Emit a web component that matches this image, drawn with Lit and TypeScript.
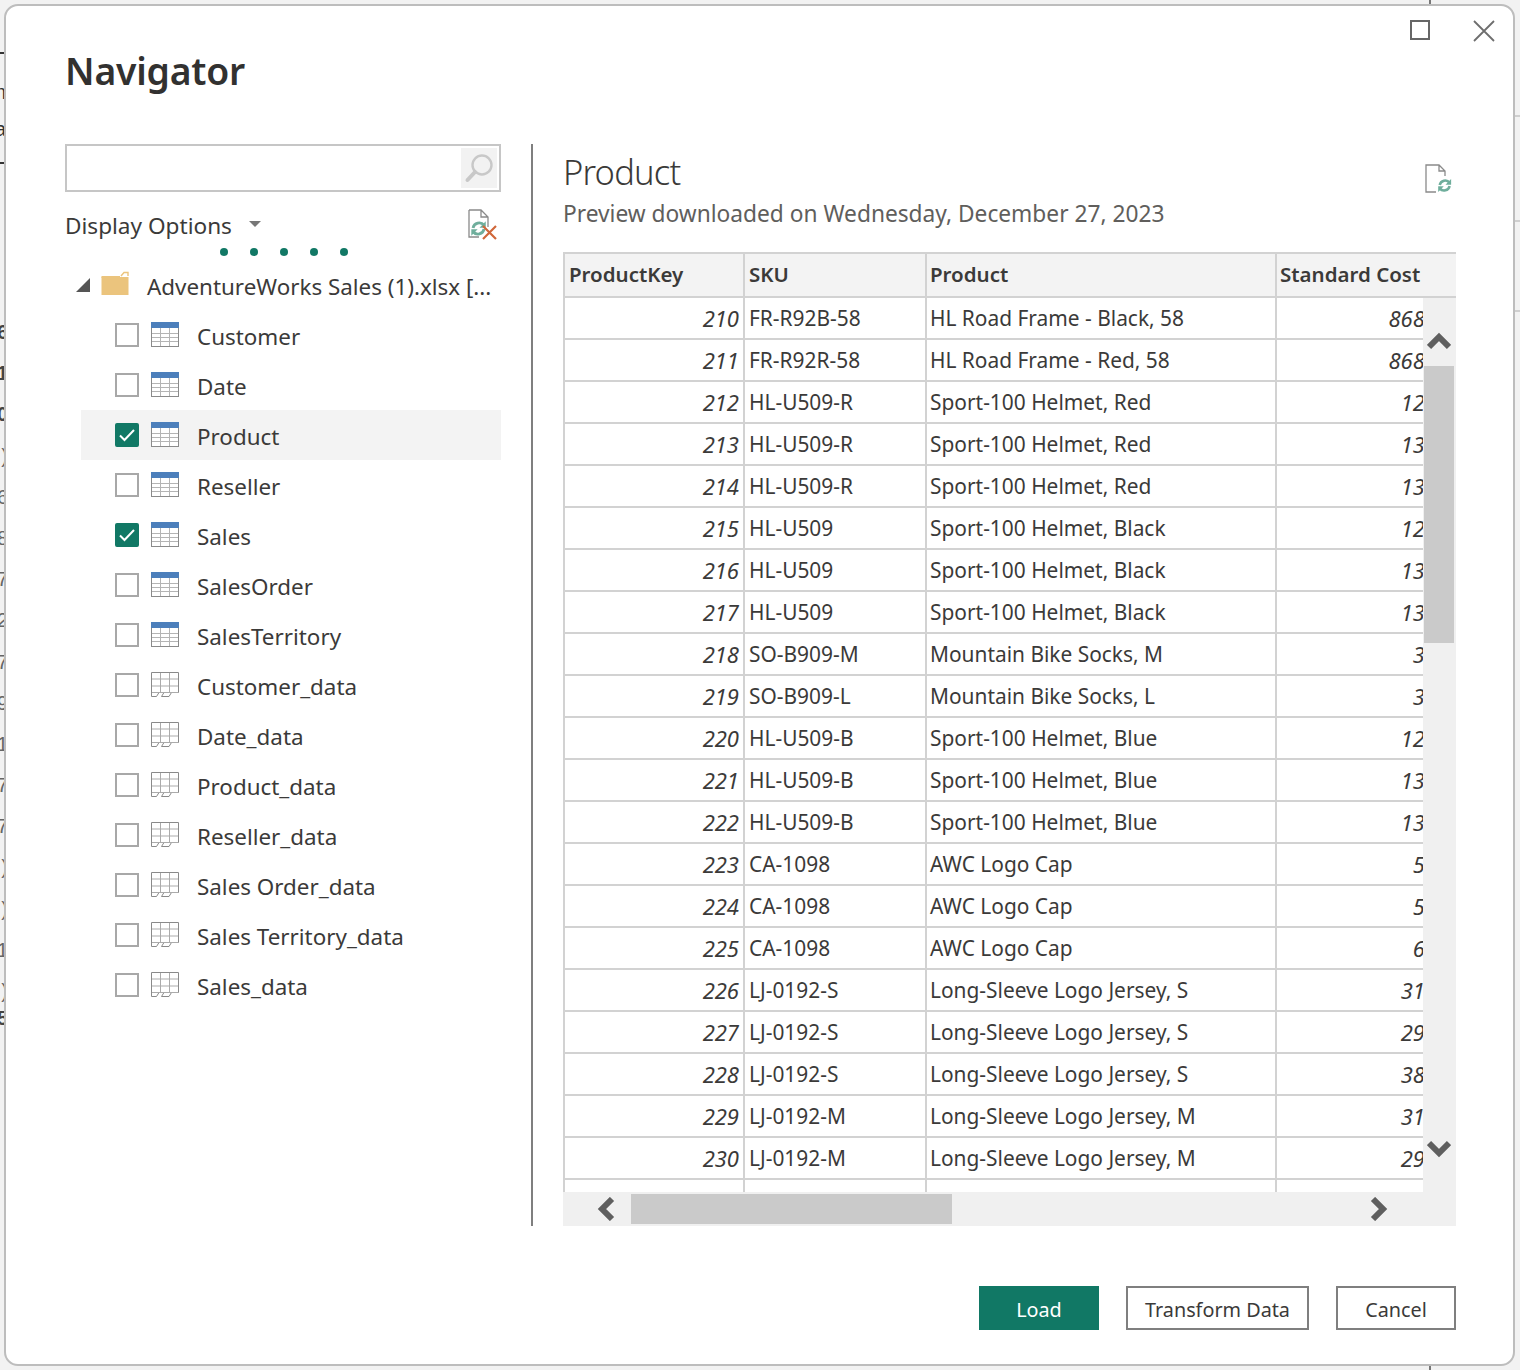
import { LitElement, html, css, svg } from "lit";
import { customElement } from "lit/decorators.js";

const ROWS: [string, string, string, string][] = [
  ["210", "FR-R92B-58", "HL Road Frame - Black, 58", "868.6342"],
  ["211", "FR-R92R-58", "HL Road Frame - Red, 58", "868.6342"],
  ["212", "HL-U509-R", "Sport-100 Helmet, Red", "12.0278"],
  ["213", "HL-U509-R", "Sport-100 Helmet, Red", "13.8782"],
  ["214", "HL-U509-R", "Sport-100 Helmet, Red", "13.0863"],
  ["215", "HL-U509", "Sport-100 Helmet, Black", "12.0278"],
  ["216", "HL-U509", "Sport-100 Helmet, Black", "13.8782"],
  ["217", "HL-U509", "Sport-100 Helmet, Black", "13.0863"],
  ["218", "SO-B909-M", "Mountain Bike Socks, M", "3.3963"],
  ["219", "SO-B909-L", "Mountain Bike Socks, L", "3.3963"],
  ["220", "HL-U509-B", "Sport-100 Helmet, Blue", "12.0278"],
  ["221", "HL-U509-B", "Sport-100 Helmet, Blue", "13.8782"],
  ["222", "HL-U509-B", "Sport-100 Helmet, Blue", "13.0863"],
  ["223", "CA-1098", "AWC Logo Cap", "5.7052"],
  ["224", "CA-1098", "AWC Logo Cap", "5.2297"],
  ["225", "CA-1098", "AWC Logo Cap", "6.9223"],
  ["226", "LJ-0192-S", "Long-Sleeve Logo Jersey, S", "31.7244"],
  ["227", "LJ-0192-S", "Long-Sleeve Logo Jersey, S", "29.0807"],
  ["228", "LJ-0192-S", "Long-Sleeve Logo Jersey, S", "38.4923"],
  ["229", "LJ-0192-M", "Long-Sleeve Logo Jersey, M", "31.7244"],
  ["230", "LJ-0192-M", "Long-Sleeve Logo Jersey, M", "29.0807"],
  ["", "", "", ""],
];

const ITEMS: [string, boolean, "table" | "sheet"][] = [
  ["Customer", false, "table"],
  ["Date", false, "table"],
  ["Product", true, "table"],
  ["Reseller", false, "table"],
  ["Sales", true, "table"],
  ["SalesOrder", false, "table"],
  ["SalesTerritory", false, "table"],
  ["Customer_data", false, "sheet"],
  ["Date_data", false, "sheet"],
  ["Product_data", false, "sheet"],
  ["Reseller_data", false, "sheet"],
  ["Sales Order_data", false, "sheet"],
  ["Sales Territory_data", false, "sheet"],
  ["Sales_data", false, "sheet"],
];

const tableIcon = html`<svg class="ticon" width="28" height="26" viewBox="0 0 28 26">
  <rect x="0.5" y="1" width="27" height="23.5" fill="#fff" stroke="#8a8a8a"/>
  <path d="M1 11.5H27M1 15.5H27M1 19.5H27M9.5 6V24M18.5 6V24" stroke="#b4b4b4" fill="none"/>
  <rect x="0" y="0" width="28" height="6" fill="#4c7fbb"/>
</svg>`;

const sheetIcon = html`<svg class="ticon" width="28" height="26" viewBox="0 0 28 26">
  <path d="M0.5 0.5H27.5V20.5H20.5L18 24.5H10.5L13 20.5H8L5.5 24.5H0.5Z" fill="#fff" stroke="#8a8a8a"/>
  <path d="M1 7H27M1 14H27M1 20.5H27M9.5 1V20M18.5 1V20" stroke="#ababab" fill="none"/>
</svg>`;

const arrows = svg`
  <path d="M3.2 9.5A6.6 6.6 0 0 1 14.8 6.6" fill="none" stroke="#6fae9c" stroke-width="3"/>
  <path d="M16.6 2.4V9.2H10Z" fill="#6fae9c"/>
  <path d="M14.8 10.5A6.6 6.6 0 0 1 3.2 13.4" fill="none" stroke="#6fae9c" stroke-width="3"/>
  <path d="M1.4 17.6V10.8H8Z" fill="#6fae9c"/>`;

const FONT = css`"Noto Sans", "Open Sans", sans-serif`;

@customElement("app-root")
export class AppRoot extends LitElement {
  static styles = css`
    :host {
      display: block;
      position: relative;
      width: 1520px;
      height: 1370px;
      box-sizing: border-box;
      padding: 4px 5px 4px 4px;
      background: #fafafa;
      font-family: ${FONT};
      color: #3b3a39;
      overflow: hidden;
    }
    .desk { position: absolute; inset: 0; overflow: hidden; background: #f2f2f2; }
    .desk .hline { position: absolute; left: 0; width: 8px; height: 2px; background: #333; }
    .desk .rline { position: absolute; left: 1512px; width: 8px; height: 2px; background: #cfcfcf; }
    .desk .vline { position: absolute; left: 1429px; width: 2px; height: 6px; background: #777; }
    .desk .glyphs {
      position: absolute; left: 0; top: 312px; width: 8px;
      display: flex; flex-direction: column; align-items: flex-end;
      font: 700 20px/41.2px "Liberation Sans", sans-serif; color: #444;
    }
    .desk .glyphs span { height: 41.2px; }
    .desk .glyphs .soft { font-weight: 400; color: #666; }
    .desk .glyphs .last { margin-top: -14px; }
    .desk .word {
      position: absolute; left: -10px; width: 16px; text-align: right;
      font: 400 20px/24px "Liberation Sans", sans-serif; color: #333;
    }
    .dialog {
      position: relative;
      box-sizing: border-box;
      width: 1511px;
      height: 1362px;
      border: 2px solid #bdbdbd;
      border-radius: 14px;
      background: #fff;
      display: flex;
      flex-direction: column;
    }
    .head {
      height: 138px;
      flex: none;
      display: flex;
      align-items: flex-start;
      padding: 14px 18px 0 59px;
      box-sizing: border-box;
    }
    h1 {
      margin: 26px 0 0;
      font-size: 37.3px;
      line-height: 50px;
      font-weight: 600;
      color: #323130;
      letter-spacing: -0.2px;
    }
    .winctl { margin-left: auto; display: flex; gap: 43px; }
    .winctl svg { display: block; }
    .body {
      flex: none;
      height: 1082px;
      display: grid;
      grid-template-columns: 436px 2px 893px;
      column-gap: 30px;
      padding: 0 57px 0 59px;
    }
    .divider { background: #7f7f7f; width: 2px; }
    .left { display: flex; flex-direction: column; min-width: 0; }
    .search {
      box-sizing: border-box;
      height: 48px;
      border: 2px solid #c6c6c6;
      display: flex;
      justify-content: flex-end;
      padding: 2px;
    }
    .search .btn {
      width: 36px; height: 40px; background: #f2f2f2;
      display: flex; align-items: center; justify-content: center;
    }
    .opts {
      height: 56px;
      display: flex;
      align-items: center;
      font-size: 22.6px;
      padding-top: 10px;
      box-sizing: border-box;
    }
    .opts .caret {
      width: 0; height: 0; margin: -2px 0 0 17px;
      border-left: 6px solid transparent; border-right: 6px solid transparent;
      border-top: 6px solid #777;
    }
    .opts svg { margin-left: auto; margin-right: 3px; }
    .dots { height: 8px; display: flex; gap: 22px; padding-left: 155px; }
    .dots i { width: 8px; height: 8px; border-radius: 50%; background: #117865; display: block; }
    .tree-head {
      height: 54px; display: flex; align-items: center;
      padding: 6px 0 0 11px; box-sizing: border-box;
      font-size: 22.4px;
      white-space: nowrap;
    }
    .tree-head .tri { margin-right: 11px; margin-top: -2px; }
    .tree-head .folder { margin-right: 18px; margin-top: -6px; }
    .row {
      height: 50px; display: flex; align-items: center;
      margin-left: 16px; padding-left: 34px;
      font-size: 22.4px;
    }
    .row.sel { background: #f3f3f3; }
    .name { margin-top: 2px; }
    .check {
      box-sizing: border-box; width: 24px; height: 24px;
      border: 2px solid #a8a8a8; background: #fff;
      flex: none; margin-right: 12px;
      display: flex; align-items: center; justify-content: center;
    }
    .check.on { background: #117865; border-color: #117865; border-radius: 2px; }
    .ticon { flex: none; margin-right: 18px; display: block; }
    .right { display: flex; flex-direction: column; min-width: 0; }
    .ptitle {
      height: 56px; display: flex; align-items: flex-start; justify-content: space-between;
    }
    .ptitle h2 {
      margin: 3px 0 0; font-size: 34.5px; line-height: 50px; font-weight: 300; color: #3b3a39;
      letter-spacing: -0.8px;
    }
    .ptitle svg { margin: 20px 3px 0 0; }
    .sub { font-size: 22.73px; line-height: 28px; color: #605e5c; height: 52px; }
    .grid { position: relative; flex: 1; overflow: hidden; min-height: 0; }
    table { border-collapse: separate; border-spacing: 0; table-layout: fixed; width: 922px; }
    th, td {
      box-sizing: border-box; padding: 0 4px;
      border-right: 2px solid #d2d2d2; border-bottom: 2px solid #d2d2d2;
      white-space: nowrap; overflow: hidden; font-size: 20.9px; height: 42px;
      color: #3b3a39;
    }
    th:nth-child(n + 3), td:nth-child(n + 3) { padding-left: 3px; }
    th {
      background: #f3f3f3; font-weight: 600; text-align: left; height: 46px;
      border-top: 2px solid #d2d2d2; font-size: 20.5px; padding-bottom: 3px;
    }
    th:first-child, td:first-child { border-left: 2px solid #d2d2d2; }
    td.num { text-align: right; font-style: italic; font-size: 22px; }
    .vbar {
      position: absolute; right: 0; top: 46px; bottom: 34px; width: 33px; background: #f0f0f0;
    }
    .vbar .thumb { position: absolute; left: 1px; top: 68px; width: 30px; height: 277px; background: #cacaca; }
    .vbar svg { position: absolute; left: 4px; }
    .vbar .up { top: 33px; }
    .vbar .down { top: 841px; }
    .hbar {
      position: absolute; left: 0; right: 0; bottom: 0; height: 34px; background: #f0f0f0;
    }
    .hbar .thumb { position: absolute; left: 68px; top: 2px; width: 321px; height: 30px; background: #cacaca; }
    .hbar svg { position: absolute; top: 5px; }
    .hbar .lt { left: 33px; }
    .hbar .rt { left: 806px; }
    .foot {
      padding: 60px 57px 0 0; display: flex; justify-content: flex-end; gap: 27px;
    }
    button {
      box-sizing: border-box; height: 44px; font: inherit; font-size: 19.8px;
      background: #fff; color: #3b3a39; border: 2px solid #7f7f7f; padding: 2px 0 0; margin: 0;
    }
    button.primary { background: #117865; border-color: #117865; color: #fff; width: 120px; }
    button.t { width: 183px; }
    button.c { width: 120px; }
  `;

  render() {
    return html`
      <div class="desk">
        ${[52, 162].map((y) => html`<div class="hline" style="top:${y}px"></div>`)}
        ${[115, 220, 310].map((y) => html`<div class="rline" style="top:${y}px"></div>`)}
        <div class="vline" style="top:0"></div>
        <div class="vline" style="top:1365px"></div>
        <div class="word" style="top:80px">n</div>
        <div class="word" style="top:117px">a</div>
        <div class="glyphs">
          <span>6</span><span>1</span><span>0</span>
          ${[")", "6", "8", "7", "2", "7", "9", "1", "7", "7", ")", ")", "1", ")"].map(
            (g) => html`<span class="soft">${g}</span>`
          )}
          <span class="last">5</span>
        </div>
      </div>
      <div class="dialog">
        <div class="head">
          <h1>Navigator</h1>
          <div class="winctl">
            <svg width="20" height="20" viewBox="0 0 20 20"><rect x="1" y="1" width="18" height="18" fill="none" stroke="#666" stroke-width="2"/></svg>
            <svg width="22" height="22" viewBox="0 0 22 22"><path d="M1 1L21 21M21 1L1 21" stroke="#6e6e6e" stroke-width="1.8" fill="none"/></svg>
          </div>
        </div>
        <div class="body">
          <div class="left">
            <div class="search">
              <div class="btn">
                <svg width="30" height="30" viewBox="0 0 30 30">
                  <circle cx="18" cy="12" r="9.5" fill="none" stroke="#c8c8c8" stroke-width="2.4"/>
                  <path d="M11 19L3.5 27" stroke="#c8c8c8" stroke-width="4" stroke-linecap="round"/>
                </svg>
              </div>
            </div>
            <div class="opts">
              <span>Display Options</span><span class="caret"></span>
              <svg width="30" height="32" viewBox="0 0 30 32">
                <path d="M1 1H13L20 8V18M20 8H13V1M11 28H1V1" fill="none" stroke="#8a8a8a" stroke-width="1.3"/>
                <g transform="translate(2 10) scale(.95)">${arrows}</g>
                <path d="M15 17L28 30M28 17L15 30" stroke="#d0673a" stroke-width="2.2"/>
              </svg>
            </div>
            <div class="dots"><i></i><i></i><i></i><i></i><i></i></div>
            <div class="tree-head">
              <svg class="tri" width="14" height="14" viewBox="0 0 14 14"><path d="M14 0V14H0Z" fill="#555"/></svg>
              <svg class="folder" width="28" height="24" viewBox="0 0 28 24">
                <path d="M20 5L23 1.5H27V5" fill="none" stroke="#ebc47d" stroke-width="1.4"/>
                <rect x="0.5" y="6" width="27" height="18" fill="#ebc47d"/>
                <path d="M0.5 7V5H19V7Z" fill="#ebc47d"/>
              </svg>
              <span>AdventureWorks Sales (1).xlsx [...</span>
            </div>
            ${ITEMS.map(
              ([name, on, kind]) => html`
                <div class="row ${name === "Product" ? "sel" : ""}">
                  <span class="check ${on ? "on" : ""}">
                    ${on
                      ? html`<svg width="18" height="16" viewBox="0 0 18 16"><path d="M2 8.5L6.5 13L16 3" fill="none" stroke="#fff" stroke-width="2"/></svg>`
                      : ""}
                  </span>
                  ${kind === "table" ? tableIcon : sheetIcon}
                  <span class="name">${name}</span>
                </div>
              `
            )}
          </div>
          <div class="divider"></div>
          <div class="right">
            <div class="ptitle">
              <h2>Product</h2>
              <svg width="28" height="30" viewBox="0 0 28 30">
                <path d="M11 28H1V1H14L20 7V12M14 1V7H20" fill="none" stroke="#8a8a8a" stroke-width="1.3"/>
                <g transform="translate(12 13) scale(.85)">${arrows}</g>
              </svg>
            </div>
            <div class="sub">Preview downloaded on Wednesday, December 27, 2023</div>
            <div class="grid">
              <table>
                <colgroup>
                  <col style="width:182px" /><col style="width:182px" /><col style="width:350px" /><col style="width:208px" />
                </colgroup>
                <thead>
                  <tr><th>ProductKey</th><th>SKU</th><th>Product</th><th>Standard Cost</th></tr>
                </thead>
                <tbody>
                  ${ROWS.map(
                    (r) => html`<tr><td class="num">${r[0]}</td><td>${r[1]}</td><td>${r[2]}</td><td class="num">${r[3]}</td></tr>`
                  )}
                </tbody>
              </table>
              <div class="vbar">
                <div class="thumb"></div>
                <svg class="up" width="24" height="20" viewBox="0 0 24 20"><path d="M2 16L12 6L22 16" fill="none" stroke="#5f5f5f" stroke-width="6"/></svg>
                <svg class="down" width="24" height="20" viewBox="0 0 24 20"><path d="M2 4L12 14L22 4" fill="none" stroke="#5f5f5f" stroke-width="6"/></svg>
              </div>
              <div class="hbar">
                <div class="thumb"></div>
                <svg class="lt" width="20" height="24" viewBox="0 0 20 24"><path d="M16 2L6 12L16 22" fill="none" stroke="#5f5f5f" stroke-width="6"/></svg>
                <svg class="rt" width="20" height="24" viewBox="0 0 20 24"><path d="M4 2L14 12L4 22" fill="none" stroke="#5f5f5f" stroke-width="6"/></svg>
              </div>
            </div>
          </div>
        </div>
        <div class="foot">
          <button class="primary">Load</button>
          <button class="t">Transform Data</button>
          <button class="c">Cancel</button>
        </div>
      </div>
    `;
  }
}
